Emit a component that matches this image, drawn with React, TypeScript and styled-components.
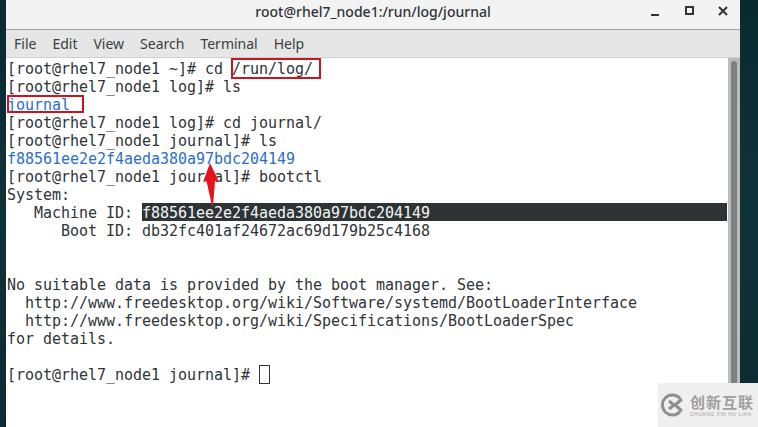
import React from "react";
import styled, { createGlobalStyle } from "styled-components";

const Global = createGlobalStyle`
  html, body { margin: 0; padding: 0; width: 758px; height: 427px; overflow: hidden; background: #0d2c33; }
  #root { width: 758px; height: 427px; }
`;

const Desktop = styled.div`
  position: relative;
  width: 758px;
  height: 427px;
  padding: 0 18px 0 6px;
  box-sizing: border-box;
  background: linear-gradient(180deg, #0a2a30 0%, #0f3238 50%, #0c2b30 100%);
  overflow: hidden;
`;

const Win = styled.div`
  display: flex;
  flex-direction: column;
  height: 100%;
  background: #fff;
`;

const TitleBar = styled.div`
  position: relative;
  flex: 0 0 30px;
  box-sizing: border-box;
  display: flex;
  align-items: center;
  justify-content: center;
  background: #f3f3f3;
  border-bottom: 1px solid #a3a3a3;
  font: 500 14px "Noto Sans", "Open Sans", sans-serif;
  color: #2e3436;
  padding-bottom: 6px;
`;

const Controls = styled.div`
  position: absolute;
  right: 0;
  top: 5px;
  display: flex;
  align-items: center;
`;

const Control = styled.svg`
  display: block;
  width: 34px;
  height: 12px;
`;

const MenuBar = styled.div`
  flex: 0 0 28px;
  box-sizing: border-box;
  display: flex;
  align-items: center;
  gap: 16px;
  padding: 0 0 0 8px;
  background: #e6e6e6;
  border-bottom: 1px solid #cfcfcf;
  font: 14px "Noto Sans", "Open Sans", sans-serif;
  color: #3a3f41;
`;

const Body = styled.div`
  position: relative;
  flex: 1;
  display: flex;
  min-height: 0;
`;

const Term = styled.pre`
  flex: 1;
  margin: 0;
  padding: 2px 0 0 1px;
  font: 15px/18px "DejaVu Sans Mono", monospace;
  letter-spacing: -0.03px;
  color: #303437;
`;

const Line = styled.div`
  height: 18px;
  white-space: pre;
`;

const Blue = styled.span`
  color: #2a6fc9;
`;

const Sel = styled.span`
  display: inline-block;
  width: 585px;
  height: 17px;
  margin-top: -1px;
  padding-top: 1px;
  background: #2e3436;
  color: #f4f4f4;
  vertical-align: top;
`;

const Cursor = styled.span`
  display: inline-block;
  width: 11px;
  height: 19px;
  border: 1px solid #303437;
  box-sizing: border-box;
  vertical-align: top;
  margin-top: -1px;
`;

const Track = styled.div`
  position: relative;
  flex: 0 0 12px;
  background: #b9bcbb;
`;

const Thumb = styled.div`
  position: absolute;
  top: 3px;
  bottom: 0;
  left: 3px;
  width: 6px;
  border-radius: 3px 3px 0 0;
  background: #7c8080;
`;

const RedBox = styled.div<{ $x: number; $y: number; $w: number; $h: number }>`
  position: absolute;
  left: ${p => p.$x}px;
  top: ${p => p.$y}px;
  width: ${p => p.$w}px;
  height: ${p => p.$h}px;
  border: 2px solid #c9161d;
  box-sizing: border-box;
`;

const Arrow = styled.svg`
  position: absolute;
  left: 203px;
  top: 163px;
  width: 16px;
  height: 43px;
`;

const Watermark = styled.div`
  position: absolute;
  right: 0;
  bottom: 0;
  width: 100px;
  height: 44px;
  display: flex;
  align-items: center;
  gap: 5px;
  padding-left: 3px;
  box-sizing: border-box;
  background: #efefef;
`;

const Logo = styled.svg`
  flex: none;
  width: 24px;
  height: 24px;
`;

const MarkText = styled.div`
  display: flex;
  flex-direction: column;
  gap: 1px;
  color: #a0a0a0;
`;

const MarkCn = styled.span`
  font: 700 15px/17px "Noto Sans CJK SC", sans-serif;
  letter-spacing: 1px;
  white-space: nowrap;
`;

const MarkEn = styled.span`
  font: 5px/6px "Liberation Sans", sans-serif;
  letter-spacing: 0.5px;
  white-space: nowrap;
`;

const lines: React.ReactNode[] = [
  "[root@rhel7_node1 ~]# cd /run/log/",
  "[root@rhel7_node1 log]# ls",
  <Blue>journal</Blue>,
  "[root@rhel7_node1 log]# cd journal/",
  "[root@rhel7_node1 journal]# ls",
  <Blue>f88561ee2e2f4aeda380a97bdc204149</Blue>,
  "[root@rhel7_node1 journal]# bootctl",
  "System:",
  <>{"   Machine ID: "}<Sel>f88561ee2e2f4aeda380a97bdc204149</Sel></>,
  "      Boot ID: db32fc401af24672ac69d179b25c4168",
  "",
  "",
  "No suitable data is provided by the boot manager. See:",
  "  http://www.freedesktop.org/wiki/Software/systemd/BootLoaderInterface",
  "  http://www.freedesktop.org/wiki/Specifications/BootLoaderSpec",
  "for details.",
  "",
  <>{"[root@rhel7_node1 journal]# "}<Cursor /></>,
];

export default function App() {
  return (
    <Desktop>
      <Global />
      <Win>
        <TitleBar>
          root@rhel7_node1:/run/log/journal
          <Controls>
            <Control viewBox="0 0 34 12">
              <rect x="13" y="9" width="8" height="2" fill="#2e3436" />
            </Control>
            <Control viewBox="0 0 34 12">
              <rect x="14" y="2" width="7" height="7" fill="none" stroke="#2e3436" strokeWidth="2" />
            </Control>
            <Control viewBox="0 0 34 12">
              <path d="M13 2l8 8M21 2l-8 8" stroke="#2e3436" strokeWidth="2" fill="none" />
            </Control>
          </Controls>
        </TitleBar>
        <MenuBar>
          <span>File</span>
          <span>Edit</span>
          <span>View</span>
          <span>Search</span>
          <span>Terminal</span>
          <span>Help</span>
        </MenuBar>
        <Body>
          <Term>
            {lines.map((l, i) => (
              <Line key={i}>{l}</Line>
            ))}
          </Term>
          <Track>
            <Thumb />
          </Track>
        </Body>
      </Win>
      <RedBox $x={231} $y={58} $w={90} $h={21} />
      <RedBox $x={7} $y={95} $w={77} $h={18} />
      <Arrow viewBox="0 0 16 43">
        <path d="M7 0 L16 19 L12 18 L10 43 L9 43 L3.5 18 L0 19 Z" fill="#e3141c" />
      </Arrow>
      <Watermark>
        <Logo viewBox="0 0 24 24">
          <path d="M19 5.5A10 10 0 1 0 19 18.5" fill="none" stroke="#8f8f8f" strokeWidth="3" />
          <path d="M8 8l5 4-5 4M21 6l-7 6 7 6" fill="none" stroke="#8f8f8f" strokeWidth="3" />
        </Logo>
        <MarkText>
          <MarkCn>创新互联</MarkCn>
          <MarkEn>CHUANG XIN HU LIAN</MarkEn>
        </MarkText>
      </Watermark>
    </Desktop>
  );
}
